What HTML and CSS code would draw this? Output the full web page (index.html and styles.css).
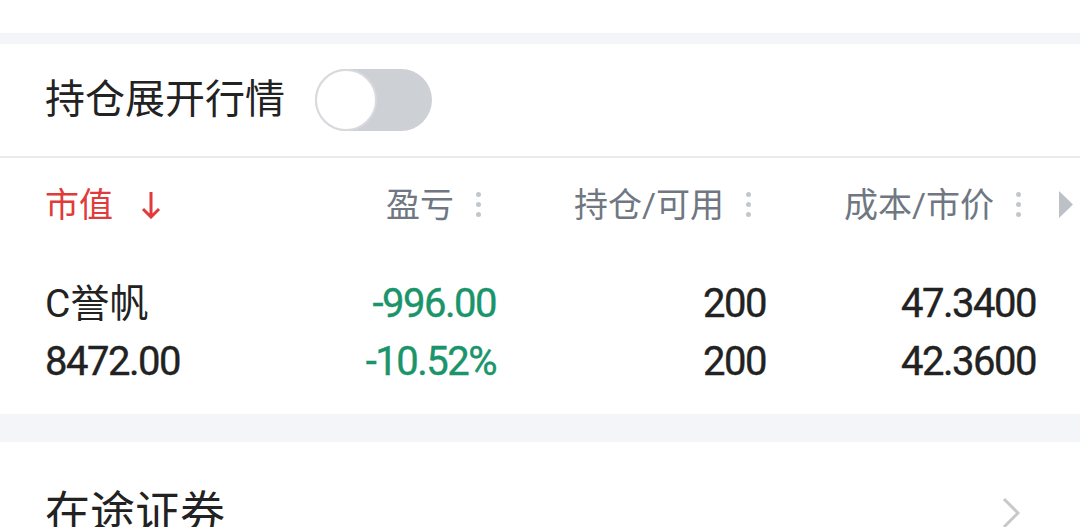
FILE: index.html
```html
<!DOCTYPE html>
<html lang="zh-CN">
<head>
    <meta charset="UTF-8">
    <meta name="viewport" content="width=device-width, initial-scale=1.0">
    <title>持仓</title>
    <link rel="stylesheet" href="styles.css">
</head>
<body>
    <div class="top-space"></div>
    <div class="band thin"></div>

    <div class="card">
        <div class="switch-row">
            <span class="switch-label">持仓展开行情</span>
            <div class="toggle"><span class="knob"></span></div>
        </div>

        <div class="grid head">
            <div class="cell sort">
                <span>市值</span>
                <svg class="arrow" width="20" height="28" viewBox="0 0 20 28">
                    <path d="M10 1 V26 M2 18 L10 26 L18 18" fill="none" stroke="#e03a3a" stroke-width="3"/>
                </svg>
            </div>
            <div class="cell num">
                <span>盈亏</span>
                <span class="dots"><i></i><i></i><i></i></span>
            </div>
            <div class="cell num">
                <span>持仓/可用</span>
                <span class="dots"><i></i><i></i><i></i></span>
            </div>
            <div class="cell num">
                <span>成本/市价</span>
                <span class="dots"><i></i><i></i><i></i></span>
            </div>
            <div class="cell more">
                <svg width="14" height="27" viewBox="0 0 14 27">
                    <polygon points="0,0 14,13.5 0,27" fill="#bcc1c7"/>
                </svg>
            </div>
        </div>

        <div class="grid body">
            <div class="val name">C誉帆</div>
            <div class="val right down">-996.00</div>
            <div class="val right">200</div>
            <div class="val right">47.3400</div>
            <div></div>

            <div class="val">8472.00</div>
            <div class="val right down">-10.52%</div>
            <div class="val right">200</div>
            <div class="val right">42.3600</div>
            <div></div>
        </div>
    </div>

    <div class="band thick"></div>

    <div class="list-row">
        <span class="list-label">在途证券</span>
        <svg width="18" height="32" viewBox="0 0 18 32">
            <polyline points="2,2 16,16 2,30" fill="none" stroke="#c8c8c8" stroke-width="3"/>
        </svg>
    </div>
</body>
</html>
```

FILE: styles.css
```css
* {
    margin: 0;
    padding: 0;
    box-sizing: border-box;
}
body {
    background: #fff;
    font-family: Roboto, "Noto Sans CJK SC", sans-serif;
    color: #222;
    width: 1080px;
    overflow: hidden;
}
.top-space {
    height: 33px;
}
.band {
    background: #f4f5f8;
}
.band.thin {
    height: 11px;
}
.band.thick {
    height: 28px;
}
.switch-row {
    height: 114px;
    display: flex;
    align-items: center;
    padding-left: 45px;
    gap: 30px;
    border-bottom: 2px solid #ebebeb;
}
.switch-label {
    font-size: 40px;
    line-height: 1;
}
.toggle {
    position: relative;
    width: 117px;
    height: 62px;
    border-radius: 31px;
    background: #cdd0d5;
}
.toggle .knob {
    position: absolute;
    left: 0;
    top: 0;
    width: 62px;
    height: 62px;
    border-radius: 50%;
    background: #fff;
    border: 2px solid #d8dadd;
}
.grid {
    display: grid;
    grid-template-columns: 180px 271px 270px 270px 44px;
    padding-left: 45px;
}
.head {
    height: 93px;
    align-items: center;
}
.cell {
    display: flex;
    align-items: center;
    font-size: 34px;
    color: #6f7782;
    line-height: 1;
}
.cell.sort {
    color: #e03a3a;
    gap: 28px;
}
.cell.num {
    justify-content: flex-end;
    gap: 22px;
    padding-right: 15px;
}
.cell.more {
    padding-left: 23px;
}
.dots {
    display: flex;
    flex-direction: column;
    gap: 5px;
}
.dots i {
    display: block;
    width: 5px;
    height: 5px;
    border-radius: 50%;
    background: #c3c7cc;
}
.body {
    padding-top: 24px;
    padding-bottom: 23px;
}
.val {
    font-size: 40px;
    line-height: 58px;
    letter-spacing: -1.5px;
    color: #222;
    white-space: nowrap;
    -webkit-text-stroke: 0.4px currentColor;
}
.val.name {
    font-size: 39px;
    letter-spacing: 0;
    -webkit-text-stroke: 0;
}
.val.right {
    text-align: right;
}
.val.down {
    color: #1a946a;
}
.list-row {
    height: 142px;
    display: flex;
    align-items: center;
    justify-content: space-between;
    padding: 0 60px 0 45px;
}
.list-label {
    font-size: 45px;
    line-height: 1;
}
```
